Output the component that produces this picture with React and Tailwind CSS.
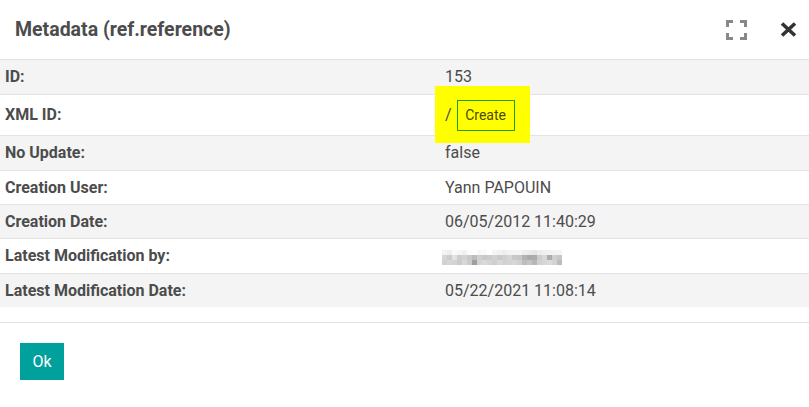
import React from "react";

const rows = [
  { label: "ID:", value: "153", h: "h-[34px]", bg: "bg-[#f4f4f4]" },
  { label: "XML ID:", value: "xml", h: "h-[41px]", bg: "bg-white" },
  { label: "No Update:", value: "false", h: "h-[35px]", bg: "bg-[#f4f4f4]" },
  { label: "Creation User:", value: "Yann PAPOUIN", h: "h-[34px]", bg: "bg-white" },
  { label: "Creation Date:", value: "06/05/2012 11:40:29", h: "h-[34px]", bg: "bg-[#f4f4f4]" },
  { label: "Latest Modification by:", value: "blur", h: "h-[35px]", bg: "bg-white" },
  { label: "Latest Modification Date:", value: "05/22/2021 11:08:14", h: "h-[34px]", bg: "bg-[#f4f4f4]" },
];

const blurRows = [
  ["#f3f3f3","#eeeeee","#fafafa","#f6f6f6","#f0f0f0","#fbfbfb","#ffffff","#f7f7f7","#fafafa","#ffffff","#f5f5f5","#f2f2f2","#eeeeee","#f3f3f3","#f4f4f4","#f5f5f5","#eeeeee","#ebebeb","#e6e6e6","#ececec","#f0f0f0","#f2f2f2","#f3f3f3","#f5f5f5"],
  ["#d6d6d6","#cccccc","#e2e2e2","#cdcdcd","#d2d2d2","#c9c9c9","#bdbdbd","#d0d0d0","#c8c8c8","#cbcbcb","#d1d1d1","#cacaca","#cfcfcf","#d6d6d6","#c8c8c8","#c6c6c6","#b3b3b3","#a9a9a9","#acacac","#cccccc","#d8d8d8","#acacac","#cfcfcf","#c7c7c7"],
  ["#d2d2d2","#d6d6d6","#d3d3d3","#cbcbcb","#d8d8d8","#cbcbcb","#9f9f9f","#d3d3d3","#d9d9d9","#d4d4d4","#cfcfcf","#d8d8d8","#d2d2d2","#d4d4d4","#d6d6d6","#d0d0d0","#bdbdbd","#c4c4c4","#b6b6b6","#d1d1d1","#d6d6d6","#dadada","#d3d3d3","#bcbcbc"],
];

function Blur() {
  return (
    <div className="flex flex-col mt-[2px] ml-[-3px]">
      {blurRows.map((r, i) => (
        <div key={i} className="flex">
          {r.map((c, j) => (
            <div key={j} className="w-[5px] h-[5px]" style={{ backgroundColor: c }} />
          ))}
        </div>
      ))}
    </div>
  );
}

function Value({ v }) {
  if (v === "xml") {
    return (
      <div className="relative flex items-center h-full">
        <div className="absolute left-[-10px] top-[-9px] w-[95px] h-[57px] bg-[#ffff00] z-10" />
        <div className="relative z-20 flex items-center">
          <span className="mr-[5px]">/</span>
          <span className="h-[31px] w-[58px] border border-[#1aa31a] flex items-center justify-center text-[14px] text-[#4a4a00]">
            Create
          </span>
        </div>
      </div>
    );
  }
  if (v === "blur") return <Blur />;
  return <span>{v}</span>;
}

export default function App() {
  return (
    <div
      className="w-[809px] h-[407px] bg-white text-[#4c4c4c] overflow-hidden"
      style={{ fontFamily: "Roboto, 'Liberation Sans', sans-serif" }}
    >
      <div className="h-[60px] border-b border-[#dee2e6] flex items-center justify-between pl-[15px] pr-[12px]">
        <h1 className="text-[19.5px] font-bold text-[#4c4c4c] mt-[1px]">Metadata (ref.reference)</h1>
        <div className="flex items-center gap-[33px]">
          <svg width="21" height="20" viewBox="0 0 21 20" fill="none" stroke="#888888" strokeWidth="3">
            <path d="M1.5 7V1.5H7" />
            <path d="M14 1.5H19.5V7" />
            <path d="M19.5 13V18.5H14" />
            <path d="M7 18.5H1.5V13" />
          </svg>
          <svg width="17" height="15" viewBox="0 0 17 15" stroke="#333333" strokeWidth="3.6" strokeLinecap="butt">
            <path d="M2 1.5L15 13.5M15 1.5L2 13.5" />
          </svg>
        </div>
      </div>
      <div className="flex flex-col">
        {rows.map((r, i) => (
          <div
            key={i}
            className={`flex items-center text-[16px] ${r.h} ${r.bg} ${i > 0 ? "border-t border-[#e3e3e3]" : ""}`}
          >
            <div className="w-[440px] pl-[5px] font-bold">{r.label}</div>
            <div className="pl-[5px] h-full flex items-center">
              <Value v={r.value} />
            </div>
          </div>
        ))}
      </div>
      <div className="h-[15px]" />
      <div className="border-t border-[#e3e3e3] pt-[20px] pl-[20px]">
        <button className="w-[44px] h-[37px] bg-[#00a09d] text-white text-[16px] flex items-center justify-center">
          Ok
        </button>
      </div>
    </div>
  );
}
